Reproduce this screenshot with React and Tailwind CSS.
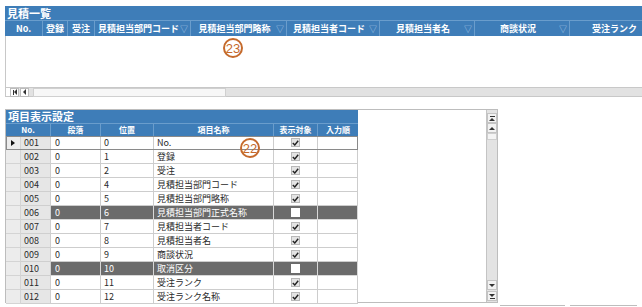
import React from "react";

const BLUE = "bg-[#3e7db8]";

const topCols = [
  { label: "No.", w: "w-[38px]" },
  { label: "登録", w: "w-[25px]" },
  { label: "受注", w: "w-[27px]" },
  { label: "見積担当部門コード", w: "w-[96px]", filter: true },
  { label: "見積担当部門略称", w: "w-[96px]", filter: true },
  { label: "見積担当者コード", w: "w-[93px]", filter: true },
  { label: "見積担当者名", w: "w-[95px]", filter: true },
  { label: "商談状況", w: "w-[95px]", filter: true },
  { label: "受注ランク", w: "w-[90px]" },
];

const rows = [
  ["001", "0", "0", "No.", true],
  ["002", "0", "1", "登録", true],
  ["003", "0", "2", "受注", true],
  ["004", "0", "4", "見積担当部門コード", true],
  ["005", "0", "5", "見積担当部門略称", true],
  ["006", "0", "6", "見積担当部門正式名称", false],
  ["007", "0", "7", "見積担当者コード", true],
  ["008", "0", "8", "見積担当者名", true],
  ["009", "0", "9", "商談状況", true],
  ["010", "0", "10", "取消区分", false],
  ["011", "0", "11", "受注ランク", true],
  ["012", "0", "12", "受注ランク名称", true],
];

// small circled annotation marker
const Marker = ({ n, className }) => (
  <div
    className={`absolute w-[20px] h-[20px] rounded-full border-2 border-[#c56a2c] text-[#c56a2c] flex items-center justify-center text-[13px] leading-none ${className}`}
    style={{ fontFamily: '"Liberation Sans", sans-serif' }}
  >
    {n}
  </div>
);

const Check = ({ on }) =>
  on ? (
    <div className="w-[9px] h-[9px] bg-[#e4e4e4] border border-[#b8b8b8] flex items-center justify-center">
      <svg width="7" height="6" viewBox="0 0 7 6">
        <path d="M0.8 3 L2.8 5 L6.2 0.8" fill="none" stroke="#222" strokeWidth="1.4" />
      </svg>
    </div>
  ) : (
    <div className="w-[9px] h-[9px] bg-white" />
  );

const ScrollBtn = ({ dir, end }) => (
  <div className="w-[10px] h-[10px] bg-[#f2f2f2] border border-[#c4c4c4] flex flex-col items-center justify-center gap-[1px]">
    {end && dir === "up" && <div className="w-[5px] h-[1px] bg-[#333]" />}
    <div
      className={
        dir === "up"
          ? "w-0 h-0 border-l-[3px] border-r-[3px] border-b-[3px] border-l-transparent border-r-transparent border-b-[#333]"
          : "w-0 h-0 border-l-[3px] border-r-[3px] border-t-[3px] border-l-transparent border-r-transparent border-t-[#333]"
      }
    />
    {end && dir === "down" && <div className="w-[5px] h-[1px] bg-[#333]" />}
  </div>
);

export default function App() {
  return (
    <div
      className="w-[642px] h-[307px] bg-white overflow-hidden relative text-[#2a2a2a]"
      style={{ fontFamily: '"Noto Sans CJK JP", "Noto Sans", sans-serif' }}
    >
      <div className="pl-[5px] pt-[6px] flex flex-col">
        {/* 見積一覧 */}
        <div className="w-[660px] flex flex-col">
          <div className={`${BLUE} h-[14px] text-white text-[11px] font-bold leading-[14px] pl-[2px]`}>見積一覧</div>
          <div className={`${BLUE} h-[16px] flex border-t border-[#6a9dcc]`}>
            {topCols.map((c, i) => (
              <div
                key={i}
                className={`${c.w} shrink-0 border-r border-[#6a9dcc] flex items-center text-white text-[9px] font-bold px-[2px]`}
              >
                <span className="flex-1 text-center whitespace-nowrap">{c.label}</span>
                {c.filter && <span className="text-[#a9c8e6] text-[8px] font-normal">▽</span>}
              </div>
            ))}
          </div>
          <div className="h-[51px] border-l border-[#c8c8c8]" />
          <div className="h-[10px] border-l border-t border-b border-[#c8c8c8] bg-[#e2e2e2] flex items-center">
            <div className="h-full w-[4px] bg-white" />
            <div className="h-[9px] w-[9px] bg-white border border-[#bcbcbc] flex items-center justify-center">
              <div className="w-[1px] h-[5px] bg-[#333]" />
              <div className="w-0 h-0 border-t-[3px] border-b-[3px] border-r-[3px] border-t-transparent border-b-transparent border-r-[#333]" />
            </div>
            <div className="h-[9px] w-[9px] ml-[1px] bg-white border border-[#bcbcbc] flex items-center justify-center">
              <div className="w-0 h-0 border-t-[3px] border-b-[3px] border-r-[3px] border-t-transparent border-b-transparent border-r-[#333]" />
            </div>
            <div className="h-[9px] w-[193px] ml-[4px] bg-[#f7f7f7] border border-[#d0d0d0]" />
          </div>
        </div>

        {/* 項目表示設定 */}
        <div className="mt-[12px] flex items-end">
          <div className="w-[493px] h-[194px] border border-[#bdbdbd] flex">
            <div className="flex-1 flex flex-col">
              <div className={`${BLUE} w-[352px] h-[13px] text-white text-[11px] font-bold leading-[13px] pl-[2px]`}>項目表示設定</div>
              <div className={`${BLUE} w-[352px] h-[14px] flex text-white text-[8px] font-bold border-t border-[#6a9dcc]`}>
                <div className="w-[45px] border-r border-[#6a9dcc] flex items-center justify-center">No.</div>
                <div className="w-[50px] border-r border-[#6a9dcc] flex items-center justify-center">段落</div>
                <div className="w-[53px] border-r border-[#6a9dcc] flex items-center justify-center">位置</div>
                <div className="w-[120px] border-r border-[#6a9dcc] flex items-center justify-center">項目名称</div>
                <div className="w-[44px] border-r border-[#6a9dcc] flex items-center justify-center">表示対象</div>
                <div className="w-[40px] flex items-center justify-center">入力順</div>
              </div>
              {rows.map(([no, dan, pos, name, on], i) => {
                const dark = !on;
                const cell = dark
                  ? "bg-[#6b6b6b] text-white border-r border-b border-[#d8d8d8]"
                  : "bg-white border-r border-b border-[#cdcdcd]";
                return (
                  <div
                    key={no}
                    className={`w-[352px] h-[14px] flex text-[9px] leading-[13px] ${i === 0 ? "outline outline-1 outline-[#8a8a8a] -outline-offset-1" : ""}`}
                  >
                    <div className="w-[15px] bg-[#ececec] border-r border-b border-[#d4d4d4] flex items-center justify-center">
                      {i === 0 && (
                        <div className="w-0 h-0 border-t-[3px] border-b-[3px] border-l-[4px] border-t-transparent border-b-transparent border-l-[#111]" />
                      )}
                    </div>
                    <div className="w-[30px] bg-[#e6e6e6] border-r border-b border-[#cfcfcf] pl-[3px]">{no}</div>
                    <div className={`w-[50px] pl-[4px] ${cell}`}>{dan}</div>
                    <div className={`w-[53px] pl-[3px] ${cell}`}>{pos}</div>
                    <div className={`w-[120px] pl-[3px] whitespace-nowrap ${cell}`}>{name}</div>
                    <div className={`w-[44px] flex items-center justify-center ${cell}`}>
                      <Check on={on} />
                    </div>
                    <div className={`w-[40px] ${cell}`} />
                  </div>
                );
              })}
            </div>
            <div className="w-[11px] h-full border-l border-[#c4c4c4] bg-[#e3e3e3] flex flex-col items-center pt-[3px] pb-[1px]">
              <ScrollBtn dir="up" end />
              <ScrollBtn dir="up" />
              <div className="w-[10px] h-[7px] bg-[#f4f4f4] border border-[#cfcfcf]" />
              <div className="flex-1" />
              <ScrollBtn dir="down" />
              <div className="h-[1px]" />
              <ScrollBtn dir="down" end />
            </div>
          </div>
          <div className="flex gap-[5px] ml-[2px] mb-[-3px]">
            <div className="w-[65px] h-[1px] bg-[#bdbdbd]" />
            <div className="w-[67px] h-[1px] bg-[#bdbdbd]" />
          </div>
        </div>
      </div>

      <Marker n="23" className="left-[223px] top-[38px]" />
      <Marker n="22" className="left-[240px] top-[138px]" />
    </div>
  );
}
